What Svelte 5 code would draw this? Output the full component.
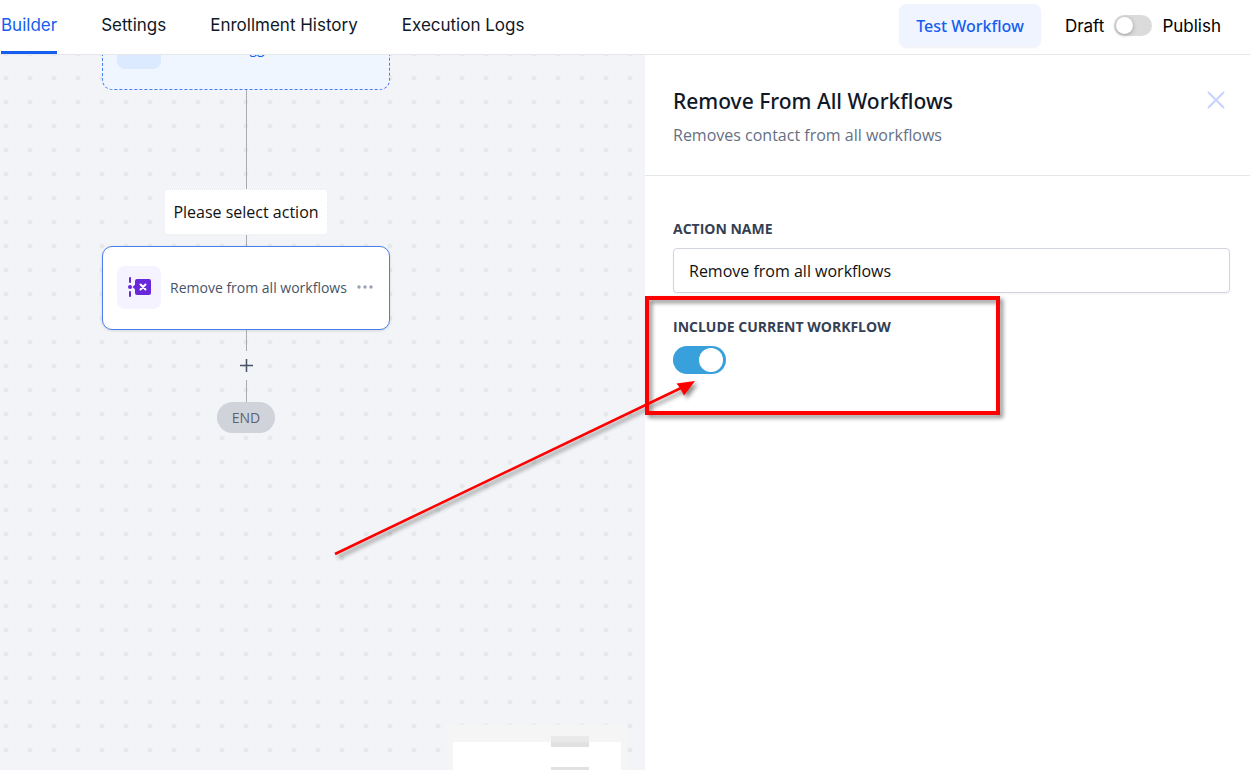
<script lang="ts">
  const tabs = ['Builder', 'Settings', 'Enrollment History', 'Execution Logs'];

  let activeTab = $state('Builder');
  let published = $state(false);
  let includeCurrent = $state(true);
  let actionName = $state('Remove from all workflows');
</script>

<div class="page">
  <header class="topbar">
    <nav class="tabs">
      {#each tabs as tab}
        <button
          class="tab {activeTab === tab ? 'active' : ''}"
          onclick={() => (activeTab = tab)}
        >
          {tab}
        </button>
      {/each}
    </nav>
    <div class="topbar-actions">
      <button class="test-btn">Test Workflow</button>
      <label class="publish">
        <span>Draft</span>
        <input type="checkbox" class="switch small" bind:checked={published} />
        <span>Publish</span>
      </label>
    </div>
  </header>

  <main class="workspace">
    <section class="canvas">
      <div class="flow">
        <button class="node trigger">
          <span class="node-icon">
            <svg width="24" height="24" viewBox="0 0 24 24" fill="none" stroke="#155eef" stroke-width="2">
              <path d="M12 3v15M4 11h16" />
            </svg>
          </span>
          <span class="node-title">Add New Trigger</span>
        </button>
        <span class="line long"></span>
        <div class="hint">Please select action</div>
        <span class="line short"></span>
        <div class="node selected">
          <span class="node-icon">
            <svg width="24" height="24" viewBox="0 0 24 24" fill="#6927da">
              <rect x="2" y="2" width="2" height="6" rx="1" />
              <rect x="2" y="16" width="2" height="6" rx="1" />
              <circle cx="3" cy="12" r="2" />
              <path d="M5.500 12 8 9.800V6a2 2 0 0 1 2-2h12a2 2 0 0 1 2 2v12a2 2 0 0 1-2 2H10a2 2 0 0 1-2-2v-3.800z" />
              <path d="M13.500 9.500l5 5M18.500 9.500l-5 5" stroke="#fff" stroke-width="2" stroke-linecap="round" />
            </svg>
          </span>
          <span class="node-title">Remove from all workflows</span>
          <button class="more" aria-label="More options">
            <svg width="16" height="4" viewBox="0 0 16 4" fill="#98a2b3">
              <circle cx="2" cy="2" r="1.700" />
              <circle cx="8" cy="2" r="1.700" />
              <circle cx="14" cy="2" r="1.700" />
            </svg>
          </button>
        </div>
        <span class="line"></span>
        <button class="add" aria-label="Add action">
          <svg width="13" height="13" viewBox="0 0 13 13" stroke="#475467" stroke-width="1.500">
            <path d="M6.500 0v13M0 6.500h13" />
          </svg>
        </button>
        <span class="line last"></span>
        <div class="end">END</div>
      </div>

      <div class="minimap">
        <div class="minimap-view"></div>
        <span class="minimap-node"></span>
        <span class="minimap-node"></span>
      </div>
    </section>

    <aside class="panel">
      <div class="panel-header">
        <div>
          <h2>Remove From All Workflows</h2>
          <p>Removes contact from all workflows</p>
        </div>
        <button class="close" aria-label="Close">
          <svg width="18" height="18" viewBox="0 0 18 18" stroke="#c7d2fe" stroke-width="2" stroke-linecap="round">
            <path d="M1.500 1.500l15 15M16.500 1.500l-15 15" />
          </svg>
        </button>
      </div>

      <form class="panel-body">
        <div class="field">
          <label for="action-name">ACTION NAME</label>
          <input id="action-name" type="text" class="text-input" bind:value={actionName} />
        </div>
        <div class="field">
          <label for="include-current">INCLUDE CURRENT WORKFLOW</label>
          <input id="include-current" type="checkbox" class="switch" bind:checked={includeCurrent} />
        </div>
      </form>

      <!-- callout box with an arrow to the toggle -->
      <svg class="callout" width="360" height="380" viewBox="0 0 360 380">
        <rect x="2" y="243" width="351" height="115" fill="none" stroke="#ff0000" stroke-width="4" />
        <path d="M-310 499L36 333" stroke="#ff0000" stroke-width="2.500" />
        <path d="M50 326L31.500 328.500L35 333L39 340.500z" fill="#ff0000" />
      </svg>
    </aside>
  </main>
</div>

<style>
  :global(body) {
    margin: 0;
    background: #fff;
  }

  .page {
    display: flex;
    flex-direction: column;
    height: 100vh;
    overflow: hidden;
    font-family: 'Open Sans', 'Noto Sans', sans-serif;
    font-size: 16px;
    color: #101828;
  }

  .page * {
    box-sizing: border-box;
  }

  button {
    padding: 0;
    border: none;
    background: none;
    font: inherit;
    color: inherit;
    cursor: pointer;
  }

  svg {
    display: block;
  }

  .topbar {
    display: flex;
    justify-content: space-between;
    flex-shrink: 0;
    height: 55px;
    padding: 0 29px 0 1px;
    border-bottom: 1px solid #e5e7eb;
    background: #fff;
    font-family: Inter, sans-serif;
    font-size: 17px;
  }

  .tabs {
    display: flex;
    gap: 44px;
  }

  .tab {
    height: 54px;
    padding-bottom: 1px;
    border-bottom: 3px solid transparent;
    white-space: nowrap;
  }

  .tab.active {
    color: #155eef;
    border-bottom-color: #155eef;
  }

  .topbar-actions {
    display: flex;
    gap: 24px;
  }

  .test-btn {
    height: 43px;
    margin-top: 4px;
    padding: 0 17px;
    border-radius: 8px;
    background: #eff4ff;
    box-shadow: 0 1px 2px rgba(16, 24, 40, 0.06);
    color: #155eef;
    font-family: 'Noto Sans', 'Open Sans', sans-serif;
    font-size: 16px;
    font-weight: 500;
    white-space: nowrap;
  }

  .publish {
    display: flex;
    align-items: center;
    gap: 10px;
    height: 51px;
    color: #000;
  }

  .switch {
    appearance: none;
    display: flex;
    align-items: center;
    width: 53px;
    height: 28px;
    margin: 0;
    padding: 0 3px;
    border-radius: 14px;
    background: #dbdbdb;
    cursor: pointer;
  }

  .switch::before {
    content: '';
    width: 24px;
    height: 24px;
    border-radius: 50%;
    background: #fff;
  }

  .switch:checked {
    justify-content: flex-end;
    background: #38a0db;
  }

  .switch.small {
    width: 38px;
    height: 21px;
    padding: 0 2px;
  }

  .switch.small::before {
    width: 17px;
    height: 17px;
    box-shadow: 0 1px 4px rgba(0, 0, 0, 0.3);
  }

  .workspace {
    display: flex;
    flex: 1;
    min-height: 0;
  }

  .canvas {
    position: relative;
    flex: 1;
    overflow: hidden;
    background-color: #f2f4f7;
    background-image: radial-gradient(circle, #e6e8e9 2px, transparent 3px);
    background-size: 24px 24px;
    background-position: -6px 11px;
  }

  .flow {
    position: absolute;
    top: -49px;
    left: 102px;
    display: flex;
    flex-direction: column;
    align-items: center;
    width: 288px;
  }

  .node {
    display: flex;
    align-items: center;
    gap: 9px;
    width: 100%;
    height: 84px;
    padding: 0 16px 2px 14px;
    border: 1px solid #4a7df0;
    border-radius: 10px;
    background: #fff;
    box-shadow: 0 1px 3px rgba(16, 24, 40, 0.12);
    font-size: 14px;
    color: #475467;
    text-align: left;
  }

  .node.trigger {
    border-style: dashed;
    background: #eff6ff;
    box-shadow: none;
    color: #155eef;
  }

  .node-icon {
    display: flex;
    align-items: center;
    justify-content: center;
    flex-shrink: 0;
    width: 44px;
    height: 43px;
    border-radius: 8px;
    background: #f4f3ff;
  }

  .trigger .node-icon {
    background: #dbeafe;
  }

  .node-title {
    flex: 1;
    white-space: nowrap;
  }

  .line {
    width: 1px;
    height: 21px;
    background: #a9abb1;
  }

  .line.long {
    height: 99px;
  }

  .line.short {
    height: 11px;
  }

  .line.last {
    height: 22px;
  }

  .hint {
    padding: 10px 8px;
    border: 1px dotted #e5e7eb;
    border-radius: 4px;
    background: #fff;
    line-height: 24px;
    color: #111;
    white-space: nowrap;
  }

  .add {
    display: flex;
    align-items: center;
    justify-content: center;
    width: 29px;
    height: 29px;
  }

  .end {
    padding: 0 15px;
    border-radius: 16px;
    background: #d0d3da;
    font-size: 14px;
    line-height: 31px;
    color: #5b6472;
  }

  .minimap {
    position: absolute;
    right: 18px;
    bottom: 0;
    display: flex;
    flex-direction: column;
    gap: 20px;
    width: 180px;
    height: 45px;
    padding: 11px 0 0 104px;
    overflow: hidden;
    background: #f5f5f5;
  }

  .minimap-view {
    position: absolute;
    inset: 17px 6px 0;
    background: #fff;
  }

  .minimap-node {
    position: relative;
    flex-shrink: 0;
    width: 38px;
    height: 11px;
    background: #e1e1e1;
  }

  .minimap-node:first-of-type {
    background: linear-gradient(#e9e9e9 6px, #e1e1e1 6px);
  }

  .panel {
    position: relative;
    width: 48.4%;
    background: #fff;
  }

  .panel-header {
    display: flex;
    justify-content: space-between;
    align-items: flex-start;
    padding: 32px 25px 28px 28px;
    border-bottom: 1px solid #e5e7eb;
  }

  h2 {
    margin: 0;
    font-family: 'Noto Sans', 'Open Sans', sans-serif;
    font-size: 21px;
    font-weight: 500;
    line-height: 28px;
    color: #101828;
  }

  .panel-header p {
    margin: 8px 0 0;
    font-size: 16px;
    line-height: 24px;
    color: #667085;
  }

  .close {
    padding: 4px 0;
  }

  .panel-body {
    display: flex;
    flex-direction: column;
    gap: 24px;
    padding: 43px 20px 0 28px;
  }

  .field {
    display: flex;
    flex-direction: column;
    gap: 9px;
  }

  .field label {
    font-size: 14px;
    font-weight: 700;
    line-height: 20px;
    color: #344054;
  }

  .text-input {
    width: 100%;
    height: 45px;
    padding: 0 15px;
    border: 1px solid #d0d5dd;
    border-radius: 4px;
    background: #fff;
    box-shadow: 0 1px 2px rgba(16, 24, 40, 0.05);
    font-family: inherit;
    font-size: 16px;
    color: #111;
  }

  .callout {
    position: absolute;
    top: 0;
    left: 0;
    overflow: visible;
    pointer-events: none;
    filter: drop-shadow(3px 3px 2px rgba(0, 0, 0, 0.45));
  }
</style>
